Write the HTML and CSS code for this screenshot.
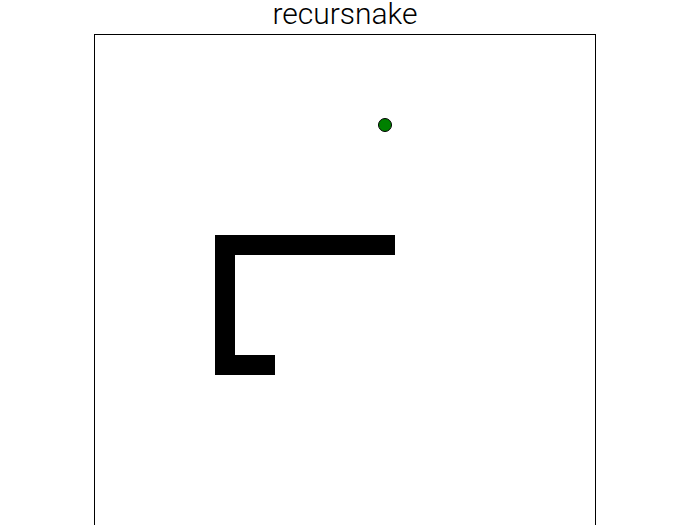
FILE: index.html
```html
<!DOCTYPE html>
<html>
<head>
<meta charset="utf-8">
<title>recursnake</title>
<link rel="stylesheet" href="styles.css">
</head>
<body>
<main class="page">
  <h1 class="title">recursnake</h1>
  <div class="board">
    <svg class="field" width="500" height="500" viewBox="0 0 500 500">
      <rect x="120" y="200" width="180" height="20" fill="#000"/>
      <rect x="120" y="200" width="20" height="140" fill="#000"/>
      <rect x="120" y="320" width="60" height="20" fill="#000"/>
      <circle cx="290" cy="90" r="6.5" fill="#008000" stroke="#000" stroke-width="1"/>
    </svg>
  </div>
</main>
</body>
</html>
```
FILE: styles.css
```css
html, body {
  margin: 0;
  padding: 0;
  background: #fff;
}
.page {
  width: 690px;
  display: flex;
  flex-direction: column;
  align-items: center;
  font-family: Roboto, "Liberation Sans", sans-serif;
}
.title {
  margin: 0;
  padding-bottom: 6px;
  font-size: 30px;
  font-weight: 300;
  line-height: 28px;
  color: #000;
}
.board {
  border: 1px solid #000;
  width: 500px;
  height: 500px;
}
.field {
  display: block;
}
```
